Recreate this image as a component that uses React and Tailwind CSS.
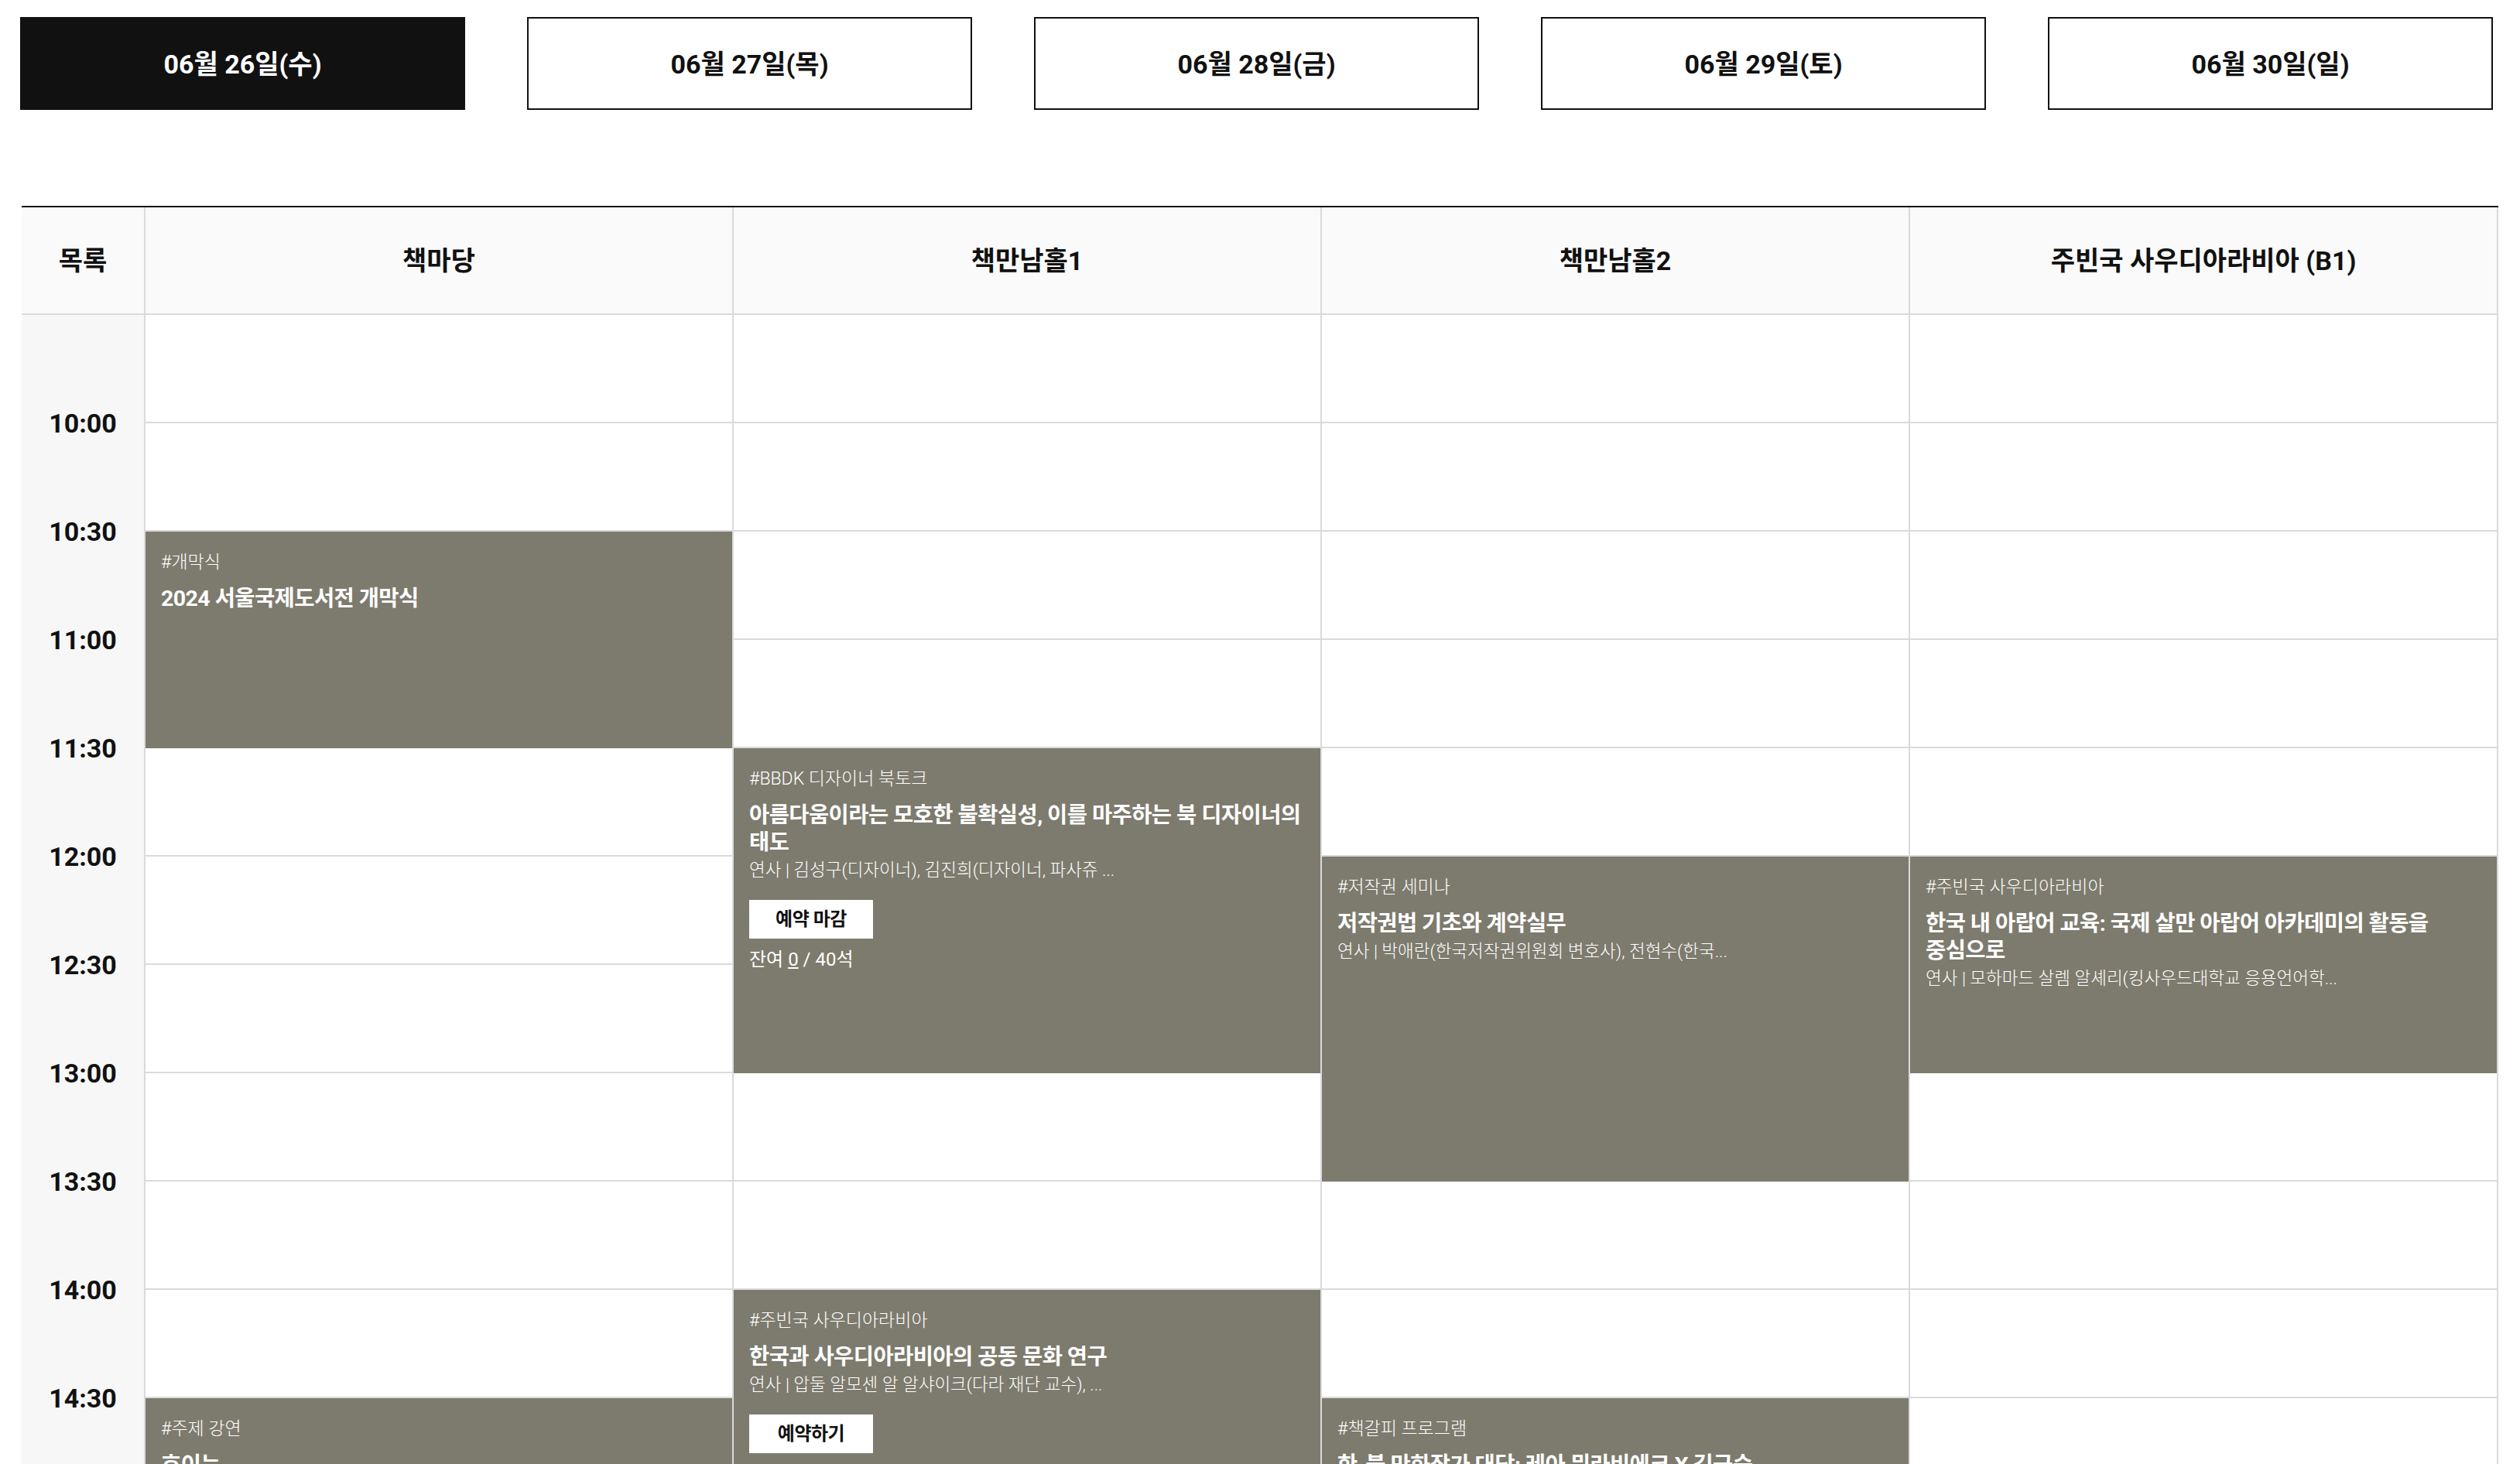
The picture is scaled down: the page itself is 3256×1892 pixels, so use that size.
import { useState } from 'react'

const dates = ['06월 26일(수)', '06월 27일(목)', '06월 28일(금)', '06월 29일(토)', '06월 30일(일)']

const venues = ['책마당', '책만남홀1', '책만남홀2', '주빈국 사우디아라비아 (B1)']

const times = ['10:00', '10:30', '11:00', '11:30', '12:00', '12:30', '13:00', '13:30', '14:00', '14:30', '15:00', '15:30']

const ROWS = 12

const spanHeights = {
  1: 'h-[140px]',
  2: 'h-[280px]',
  3: 'h-[420px]',
}

// start = half-hour row index (0 = 09:30)
const schedule = [
  [
    { start: 2, span: 2, tag: '#개막식', title: '2024 서울국제도서전 개막식' },
    { start: 10, span: 2, tag: '#주제 강연', title: '흐이는' },
  ],
  [
    {
      start: 4,
      span: 3,
      tag: '#BBDK 디자이너 북토크',
      title: '아름다움이라는 모호한 불확실성, 이를 마주하는 북 디자이너의 태도',
      speaker: '연사 | 김성구(디자이너), 김진희(디자이너, 파사쥬 ...',
      button: '예약 마감',
      seats: { left: 0, total: 40 },
    },
    {
      start: 9,
      span: 3,
      tag: '#주빈국 사우디아라비아',
      title: '한국과 사우디아라비아의 공동 문화 연구',
      speaker: '연사 | 압둘 알모센 알 알샤이크(다라 재단 교수), ...',
      button: '예약하기',
    },
  ],
  [
    {
      start: 5,
      span: 3,
      tag: '#저작권 세미나',
      title: '저작권법 기초와 계약실무',
      speaker: '연사 | 박애란(한국저작권위원회 변호사), 전현수(한국...',
    },
    {
      start: 10,
      span: 2,
      tag: '#책갈피 프로그램',
      title: '한-불 만화작가 대담: 레아 뮈라비에크 X 김금숙',
    },
  ],
  [
    {
      start: 5,
      span: 2,
      tag: '#주빈국 사우디아라비아',
      title: '한국 내 아랍어 교육: 국제 살만 아랍어 아카데미의 활동을 중심으로',
      speaker: '연사 | 모하마드 살렘 알셰리(킹사우드대학교 응용언어학...',
    },
  ],
]

const buildCells = (events) => {
  const cells = []
  let row = 0
  while (row < ROWS) {
    const ev = events.find((e) => e.start === row)
    if (ev) {
      cells.push({ type: 'event', ev, key: `e${row}` })
      row += ev.span
    } else {
      cells.push({ type: 'empty', key: `c${row}` })
      row += 1
    }
  }
  return cells
}

const EventCard = ({ ev }) => (
  <div className={`${spanHeights[ev.span]} flex flex-col items-start overflow-hidden bg-[#7d7b6e] px-[20px] pt-[25px] text-white`}>
    <p className="text-[23px] leading-[30px] font-light">{ev.tag}</p>
    <p className="mt-[14px] break-keep text-[28.5px] leading-[35px] font-bold tracking-[-0.02em]">{ev.title}</p>
    {ev.speaker && (
      <p className="mt-[3px] whitespace-nowrap text-[22.5px] leading-[30px] font-light">
        {ev.speaker}
      </p>
    )}
    {ev.button && (
      <button className="mt-[24px] flex h-[50px] w-[160px] items-center justify-center bg-white text-[24px] font-bold tracking-[-0.02em] text-[#111]">
        {ev.button}
      </button>
    )}
    {ev.seats && (
      <p className="mt-[12px] text-[24px] leading-[30px]">
        잔여 <span className="underline underline-offset-2">{ev.seats.left}</span> / {ev.seats.total}석
      </p>
    )}
  </div>
)

export default function App() {
  const [activeDate, setActiveDate] = useState(0)

  return (
    <div className="min-h-screen w-[3256px] overflow-hidden bg-white font-['Roboto','Noto_Sans_CJK_KR',sans-serif] text-[#111]">
      {/* Date tabs */}
      <div className="flex gap-[80px] pl-[26px] pt-[22px]">
        {dates.map((d, i) => (
          <button
            key={d}
            onClick={() => setActiveDate(i)}
            className={`flex h-[120px] w-[575px] items-center justify-center border-2 border-[#111] pt-[2px] text-[34px] font-bold ${
              activeDate === i ? 'bg-[#111] text-white' : 'bg-white text-[#111]'
            }`}
          >
            {d}
          </button>
        ))}
      </div>

      {/* Timetable */}
      <div className="ml-[28px] mt-[124px] w-[3200px] border-t-2 border-[#111]">
        <div className="grid grid-cols-[160px_repeat(4,1fr)] border-b-2 border-[#dadada] bg-[#fafafa]">
          <div className="flex h-[137px] items-center justify-center border-r-2 border-[#dadada] pt-[2px] text-[34px] font-bold">
            목록
          </div>
          {venues.map((v) => (
            <div
              key={v}
              className="flex h-[137px] items-center justify-center border-r-2 border-[#dadada] pt-[2px] text-[34px] font-bold"
            >
              {v}
            </div>
          ))}
        </div>

        <div className="grid grid-cols-[160px_repeat(4,1fr)]">
          {/* Time column */}
          <div className="flex flex-col border-r-2 border-[#dadada] bg-[#f7f7f7]">
            <div className="h-[70px]" />
            {times.map((t) => (
              <div key={t} className="flex h-[140px] items-center justify-center text-[34px] font-bold">
                {t}
              </div>
            ))}
          </div>

          {schedule.map((events, ci) => (
            <div key={ci} className="flex flex-col border-r-2 border-[#dadada]">
              {buildCells(events).map((c) =>
                c.type === 'event' ? (
                  <EventCard key={c.key} ev={c.ev} />
                ) : (
                  <div key={c.key} className="h-[140px] border-b-2 border-[#dadada]" />
                )
              )}
            </div>
          ))}
        </div>
      </div>
    </div>
  )
}
